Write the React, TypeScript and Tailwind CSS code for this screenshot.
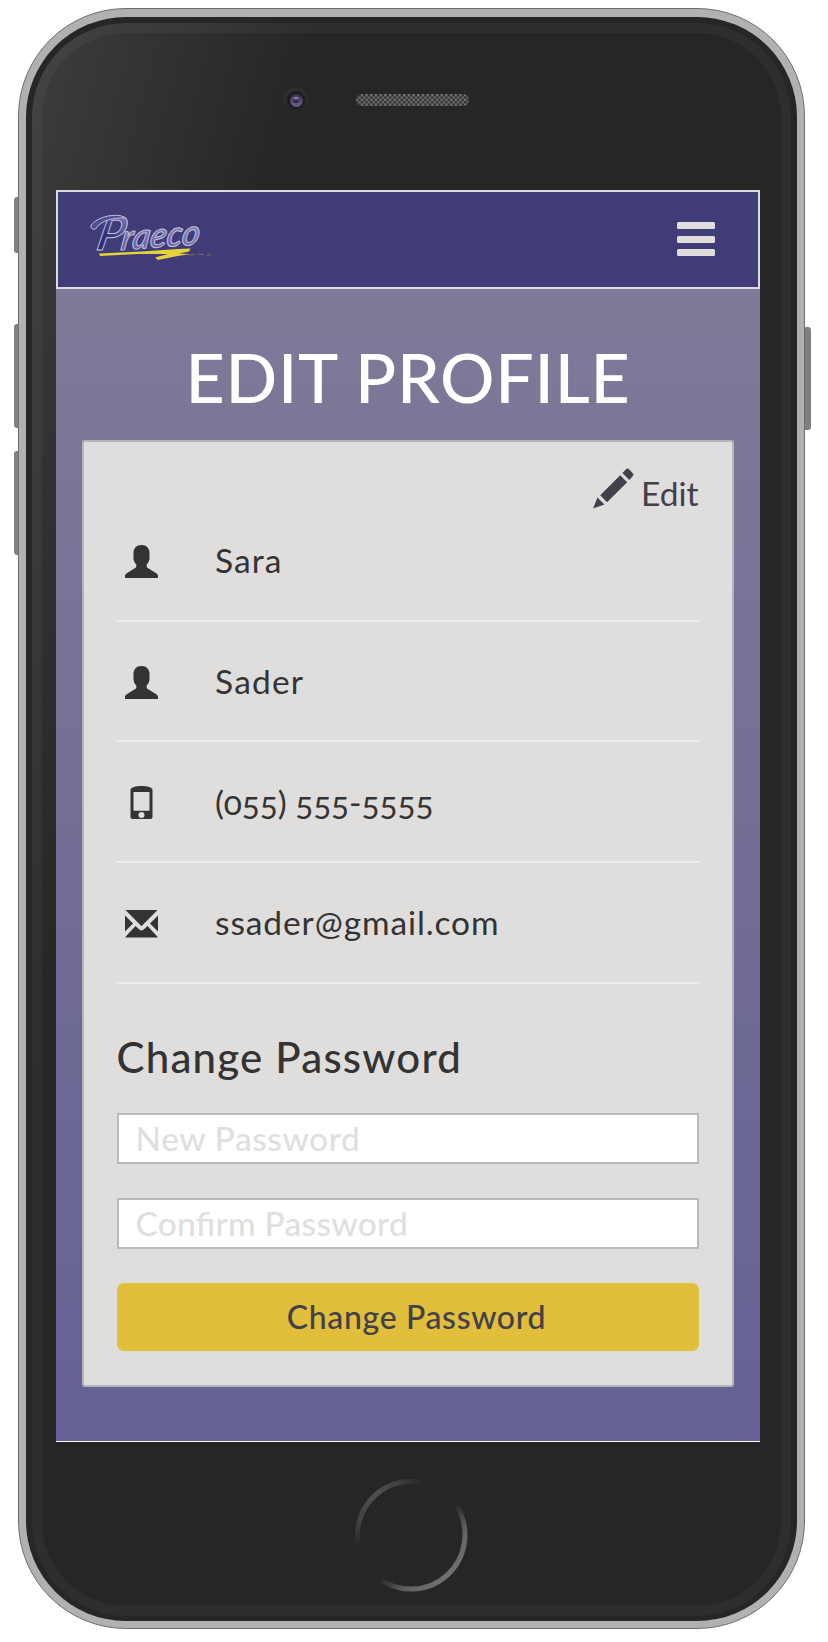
import type { ReactNode } from "react";

function Logo() {
  return (
    <svg className="-mt-[6px] h-[60px] w-[130px] overflow-visible" viewBox="0 0 130 60" aria-label="Praeco">
      <defs>
        <linearGradient id="ink" x1="0" y1="1" x2="0.6" y2="0">
          <stop offset="0" stopColor="#232a7a" />
          <stop offset="0.45" stopColor="#2c2f7c" />
          <stop offset="1" stopColor="#7f79b2" />
        </linearGradient>
        <linearGradient id="inkLight" x1="0" y1="1" x2="0.3" y2="0">
          <stop offset="0" stopColor="#5b5799" />
          <stop offset="1" stopColor="#8d87bd" />
        </linearGradient>
      </defs>
      <g fontFamily="Lato, sans-serif" fontStyle="italic" stroke="#c3c0df" strokeWidth="1">
        <text x="0" y="0" fontSize="47" fontWeight="600" fill="url(#ink)" transform="translate(13 43) skewX(-12)">
          P
        </text>
        <path
          d="M13.500 22C8 23.500 7.500 18.500 11.500 15.500C17.500 10.500 27 8 36 8.300C39 8.500 41 9.500 42 11C33 11 19 12.500 13.500 22Z"
          fill="#524f93"
        />
        <text
          x="0"
          y="0"
          fontSize="35"
          fontWeight="600"
          fill="url(#inkLight)"
          textLength="79"
          lengthAdjust="spacingAndGlyphs"
          transform="translate(38 43) rotate(-4) skewX(-12)"
        >
          raeco
        </text>
      </g>
      <path
        d="M17 46.500L60 44.500L96 42L108.500 41.500L107 44.500L97 46.500L108 47L93 49.500L76 53L73 50.500L86 47L56 47L18 49Z"
        fill="#e6d23a"
      />
      <path d="M105 48L113 47.500M116 47L122 47.500M125 48L129 48" stroke="#7d7350" strokeWidth="1" fill="none" />
    </svg>
  );
}

function UserIcon() {
  return (
    <svg className="mt-[2px] size-[33px] fill-[#333333]" viewBox="0 0 33 33">
      <path d="M16.500 0C21.500 0 24.500 3.500 24.500 8V13C24.500 15.500 23.500 17.800 21.700 19.500C21.500 20.500 21.600 21.500 22 22.500L30.500 27.800C32 28.800 33 29.500 33 31V33H0V31C0 29.500 1 28.800 2.500 27.800L11 22.500C11.400 21.500 11.500 20.500 11.300 19.500C9.500 17.800 8.500 15.500 8.500 13V8C8.500 3.500 11.500 0 16.500 0Z" />
    </svg>
  );
}

function MobileIcon() {
  return (
    <svg className="mt-[2px] size-[33px] fill-[#333333]" viewBox="0 0 33 33">
      <path
        fillRule="evenodd"
        d="M5.500 3.800C5.500 1.500 11 0 16.500 0C22 0 27.500 1.500 27.500 3.800V31C27.500 32.300 26.700 33 25.500 33H7.500C6.300 33 5.500 32.300 5.500 31ZM8.500 6V24.700H24.500V6ZM16.500 26A3 3 0 1 0 16.500 32A3 3 0 1 0 16.500 26Z"
      />
    </svg>
  );
}

function MailIcon() {
  return (
    <svg className="mt-[2px] size-[33px] fill-[#333333]" viewBox="0 0 33 33">
      <path d="M0.500 3H32.500L17.200 18.600Q16.500 19.200 15.800 18.600ZM0 8.500L8 16.500L0 24.500ZM33 8.500V24.500L25 16.500ZM10.500 19L14.300 22.600Q16.500 24.300 18.700 22.600L22.500 19L32.500 29.700V30.500H0.500V29.700Z" />
    </svg>
  );
}

function PencilIcon() {
  return (
    <svg className="h-[41px] w-[41px] fill-[#433f4b]" viewBox="0 0 41 41">
      <path d="M0 40.500L4.500 29.500L11.500 36.500ZM7.200 27.300L27.200 7.200L34.200 14.200L14 34.300ZM29.400 5L33.400 1Q34.600 0 35.800 1L40 5.400Q41 6.600 40 7.800L36.300 11.900Z" />
    </svg>
  );
}

function InfoRow({ icon, children }: { icon: ReactNode; children: ReactNode }) {
  return (
    <li className="flex h-[120.700px] items-center border-b-2 border-[#ececeb] pl-[8.500px]">
      {icon}
      <span className="ml-[57px] text-[33.500px] leading-10">{children}</span>
    </li>
  );
}

function HomeButton() {
  return (
    <svg className="h-[113px] w-[113px]" viewBox="0 0 113 113" fill="none" strokeWidth="5">
      <defs>
        <linearGradient id="arcTop" x1="0" y1="50" x2="75" y2="20" gradientUnits="userSpaceOnUse">
          <stop offset="0" stopColor="#3c3c3c" />
          <stop offset="0.4" stopColor="#505050" />
          <stop offset="0.7" stopColor="#404040" />
          <stop offset="1" stopColor="#262626" />
        </linearGradient>
        <linearGradient id="arcLeft" x1="0" y1="45" x2="0" y2="68" gradientUnits="userSpaceOnUse">
          <stop offset="0" stopColor="#262626" stopOpacity="0" />
          <stop offset="1" stopColor="#262626" />
        </linearGradient>
        <linearGradient id="arcBottom" x1="36" y1="36" x2="95" y2="95" gradientUnits="userSpaceOnUse">
          <stop offset="0.45" stopColor="#262626" />
          <stop offset="0.75" stopColor="#606060" />
          <stop offset="1" stopColor="#707070" />
        </linearGradient>
      </defs>
      <path d="M3.600 68A54 54 0 0 1 73 5" stroke="url(#arcTop)" />
      <path d="M2 70A54 54 0 0 1 3.500 44" stroke="url(#arcLeft)" strokeWidth="8" />
      <path d="M101.500 27A54 54 0 0 1 22 98" stroke="url(#arcBottom)" />
    </svg>
  );
}

function Camera() {
  return (
    <span className="flex size-[26px] items-center justify-center rounded-full bg-linear-to-b from-[#2f2f2f] to-[#262626]">
      <span className="flex size-[18px] items-center justify-center rounded-full bg-[#1c1b1e]">
        <span className="flex size-[13px] justify-center rounded-full bg-linear-to-b from-[#3a2f50] to-[#6f5f8c] pt-[3px]">
          <span className="h-[6px] w-[6px] rounded-full bg-linear-to-b from-[#b5b0c0] via-[#3d3550] to-[#2b2438]" />
        </span>
      </span>
    </span>
  );
}

function Speaker() {
  return (
    <svg className="h-[12px] w-[113px]" viewBox="0 0 113 12">
      <defs>
        <pattern id="mesh" width="4.700" height="4.700" patternUnits="userSpaceOnUse">
          <rect width="4.700" height="4.700" fill="#2c2c2c" />
          <rect width="2.350" height="2.350" fill="#787878" />
          <rect x="2.350" y="2.350" width="2.350" height="2.350" fill="#6e6e6e" />
        </pattern>
      </defs>
      <rect width="113" height="12" rx="6" fill="url(#mesh)" />
    </svg>
  );
}

export default function App() {
  return (
    <div className="relative h-[1642px] w-[828px] overflow-hidden bg-white pt-[8px] pl-[17.500px] font-[Lato,sans-serif] text-[#333333]">
      <span className="absolute top-[197px] left-[13.500px] h-[56px] w-[8px] rounded-[3px] bg-[#807f84]" />
      <span className="absolute top-[324px] left-[13.500px] h-[104px] w-[8px] rounded-[3px] bg-[#807f84]" />
      <span className="absolute top-[451px] left-[13.500px] h-[104px] w-[8px] rounded-[3px] bg-[#807f84]" />
      <span className="absolute top-[327px] left-[802.500px] h-[103px] w-[8px] rounded-[3px] bg-[#807f84]" />

      <div className="relative h-[1621px] w-[787.500px] rounded-[108px] border border-[#6e6e6e] bg-[#b1b1b1] p-[7.500px]">
        <div className="h-full rounded-[100px] bg-[#262626] px-[6px] pt-[6px] pb-[5px]">
          <div className="flex h-full flex-col rounded-[94px] border-[10px] border-white/4 bg-[linear-gradient(105deg,#3d3d3d_0px,#262626_275px)] bg-origin-border">
            <div className="h-[157.500px] w-full shrink-0">
              <div className="flex items-center pt-[54.500px] pl-[241px]">
                <Camera />
                <span className="ml-[47px]">
                  <Speaker />
                </span>
              </div>
            </div>

            <div className="ml-[14px] flex h-[1252px] w-[704px] shrink-0 flex-col border-b border-white bg-linear-to-b from-[#817c98] to-[#656194]">
              <nav className="flex h-[99px] shrink-0 items-center justify-between border-2 border-[#dcdbe3] bg-[#3f3c78] pr-[43.500px] pl-[24px]">
                <Logo />
                <div className="-mt-[1px] flex w-[38px] flex-col gap-[6.500px]">
                  <span className="h-[7px] rounded-[1.500px] bg-[#dfdedc]" />
                  <span className="h-[7px] rounded-[1.500px] bg-[#dfdedc]" />
                  <span className="h-[7px] rounded-[1.500px] bg-[#dfdedc]" />
                </div>
              </nav>

              <h1 className="flex h-[151px] shrink-0 items-center justify-center pt-6 text-[68px] leading-none font-medium tracking-[0.750px] text-white">
                EDIT PROFILE
              </h1>

              <main className="ml-[25.500px] h-[947px] w-[652px] shrink-0 rounded-[3px] border-2 border-[#b5b5b9] bg-[#dfdedc] px-[33px] pt-[34px]">
                <div className="flex h-[34px] items-center justify-end text-[#433f4b]">
                  <span className="-mt-[10px]">
                    <PencilIcon />
                  </span>
                  <span className="ml-[7.500px] text-[33.500px] leading-[34px]">Edit</span>
                </div>

                <ul className="-mt-[9px]">
                  <InfoRow icon={<UserIcon />}>
                    <span className="tracking-[1.100px]">Sara</span>
                  </InfoRow>
                  <InfoRow icon={<UserIcon />}>
                    <span className="tracking-[1.200px]">Sader</span>
                  </InfoRow>
                  <InfoRow icon={<MobileIcon />}>
                    <span className="tracking-[-0.100px] [font-feature-settings:'onum']">(055) 555-5555</span>
                  </InfoRow>
                  <InfoRow icon={<MailIcon />}>
                    <span className="tracking-[0.900px]">ssader@gmail.com</span>
                  </InfoRow>
                </ul>

                <h2 className="mt-[48.600px] text-[42px] leading-[50px] font-medium tracking-[1.200px]">Change Password</h2>

                <div className="mt-[30.500px] flex h-[51px] items-center border-2 border-[#b6babd] bg-white pl-[17px] text-[33.500px] leading-[47px] font-medium tracking-[0.550px] text-[#dfdfde]">
                  New Password
                </div>
                <div className="mt-[34px] flex h-[51px] items-center border-2 border-[#b6babd] bg-white pl-[17px] text-[33.500px] leading-[47px] font-medium tracking-[0.250px] text-[#dfdfde] [font-feature-settings:'liga']">
                  Confirm Password
                </div>
                <button className="mt-[34px] block h-[68px] w-full rounded-[7px] bg-[#e1be3c] pl-[18px] text-center text-[32px] leading-[68px] font-medium tracking-[0.650px] text-[#433f4b]">
                  Change Password
                </button>
              </main>
            </div>

            <div className="mt-[37px] ml-[312.500px]">
              <HomeButton />
            </div>
          </div>
        </div>
      </div>
    </div>
  );
}
